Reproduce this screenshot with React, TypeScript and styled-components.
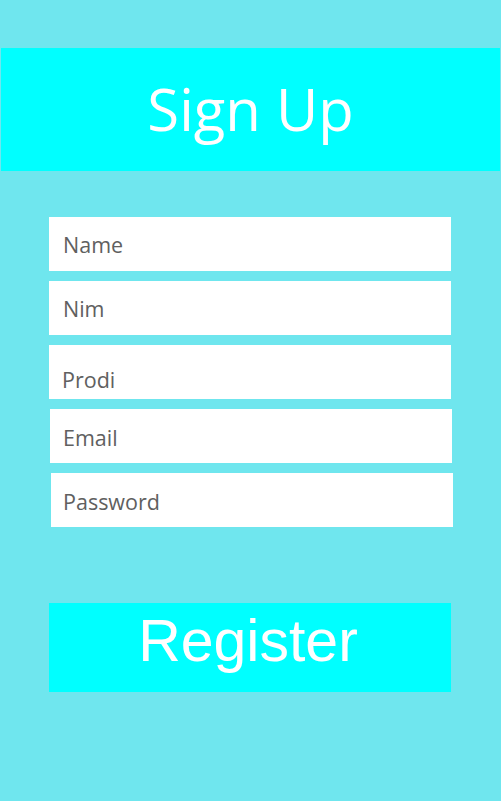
import React from 'react';
import styled, { createGlobalStyle } from 'styled-components';

const GlobalStyle = createGlobalStyle`
  html, body {
    margin: 0;
    padding: 0;
    background: #6fe6ee;
  }
`;

const Page = styled.div`
  width: 501px;
  height: 801px;
  box-sizing: border-box;
  padding-top: 48px;
  background: #6fe6ee;
  display: flex;
  flex-direction: column;
`;

const Header = styled.div`
  width: 499px;
  height: 123px;
  margin-left: 1px;
  background: #00ffff;
  display: flex;
  align-items: center;
  justify-content: center;
`;

const Title = styled.h1`
  margin: 0;
  font-family: 'Open Sans', 'Noto Sans', sans-serif;
  font-weight: 400;
  font-size: 58px;
  color: #ffffff;
  line-height: 1;
  padding-bottom: 2px;
`;

const Form = styled.form`
  width: 402px;
  margin: 46px 0 0 49px;
  display: flex;
  flex-direction: column;
  gap: 10px;
`;

const Field = styled.input<{ $shift?: number; $drop?: number; $indent?: number }>`
  display: block;
  box-sizing: border-box;
  width: 402px;
  height: 54px;
  margin: 0 0 0 ${(p) => p.$shift ?? 0}px;
  padding: ${(p) => p.$drop ?? 0}px 0 0 ${(p) => (p.$indent ?? 14) - (p.$shift ?? 0)}px;
  border: none;
  outline: none;
  background: #ffffff;
  font-family: 'Open Sans', 'Noto Sans', sans-serif;
  font-size: 21.5px;
  color: #606060;

  &::placeholder {
    color: #606060;
    opacity: 1;
  }
`;

const RegisterButton = styled.button`
  width: 402px;
  height: 89px;
  margin: 76px 0 0 49px;
  border: none;
  background: #00ffff;
  color: #ffffff;
  font-family: 'Liberation Sans', Arial, sans-serif;
  font-size: 59px;
  line-height: 1;
  padding: 0 4px 12px 0;
  cursor: pointer;
`;

const fields = [
  { name: 'Name', shift: 0, drop: 0, indent: 14 },
  { name: 'Nim', shift: 0, drop: 0, indent: 14 },
  { name: 'Prodi', shift: 0, drop: 14, indent: 13 },
  { name: 'Email', shift: 1, drop: 2, indent: 14 },
  { name: 'Password', shift: 2, drop: 2, indent: 14 },
];

const App: React.FC = () => (
  <>
    <GlobalStyle />
    <Page>
      <Header>
        <Title>Sign Up</Title>
      </Header>
      <Form onSubmit={(e) => e.preventDefault()}>
        {fields.map((f) => (
          <Field
            key={f.name}
            placeholder={f.name}
            type={f.name === 'Password' ? 'password' : 'text'}
            $shift={f.shift}
            $drop={f.drop}
            $indent={f.indent}
          />
        ))}
      </Form>
      <RegisterButton type="button">Register</RegisterButton>
    </Page>
  </>
);

export default App;
